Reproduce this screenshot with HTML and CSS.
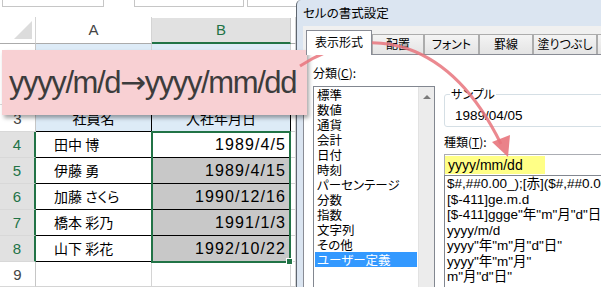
FILE: index.html
```html
<!DOCTYPE html>
<html lang="ja">
<head>
  <meta charset="UTF-8" />
  <title>セルの書式設定</title>
  <link rel="stylesheet" href="styles.css">
</head>
<body>
<div class="screen">

  <!-- Worksheet -->
  <div class="sheet">
    <div class="ribbon">
      <span class="rbox rbox-name"></span>
      <span class="rbox rbox-mid"></span>
      <span class="rbox rbox-formula"></span>
    </div>

    <div class="row colheads">
      <div class="corner"><span class="tri"></span></div>
      <div class="colhead">A</div>
      <div class="colhead sel">B</div>
      <div class="colhead"></div>
    </div>

    <div class="row r2">
      <div class="rowhead">2</div>
      <div class="cell blue tbl-bottom"></div>
      <div class="cell blue tbl-bottom"></div>
      <div class="cell"></div>
    </div>
    <div class="row r3">
      <div class="rowhead">3</div>
      <div class="cell blue tbl head">社員名</div>
      <div class="cell blue tbl head">入社年月日</div>
      <div class="cell"></div>
    </div>
    <div class="row rd">
      <div class="rowhead sel">4</div>
      <div class="cell tbl name">田中 博</div>
      <div class="cell tbl date">1989/4/5</div>
      <div class="cell"></div>
    </div>
    <div class="row rd">
      <div class="rowhead sel">5</div>
      <div class="cell tbl name">伊藤 勇</div>
      <div class="cell tbl date picked">1989/4/15</div>
      <div class="cell"></div>
    </div>
    <div class="row rd">
      <div class="rowhead sel">6</div>
      <div class="cell tbl name">加藤 さくら</div>
      <div class="cell tbl date picked">1990/12/16</div>
      <div class="cell"></div>
    </div>
    <div class="row rd">
      <div class="rowhead sel">7</div>
      <div class="cell tbl name">橋本 彩乃</div>
      <div class="cell tbl date picked">1991/1/3</div>
      <div class="cell"></div>
    </div>
    <div class="row rd">
      <div class="rowhead sel">8</div>
      <div class="cell tbl name">山下 彩花</div>
      <div class="cell tbl date picked">1992/10/22</div>
      <div class="cell"></div>
    </div>
    <div class="row r9">
      <div class="rowhead">9</div>
      <div class="cell"></div>
      <div class="cell"></div>
      <div class="cell"></div>
    </div>

    <!-- selected range B4:B8 -->
    <div class="selection"><span class="handle"></span></div>
  </div>

  <!-- Format Cells dialog -->
  <div class="dialog">
    <div class="titlebar">セルの書式設定</div>
    <div class="dlg-body">
      <div class="tabs">
        <span class="tab active">表示形式</span>
        <span class="tab t-align">配置</span>
        <span class="tab t-font">フォント</span>
        <span class="tab t-border">罫線</span>
        <span class="tab t-fill">塗りつぶし</span>
        <span class="tab t-protect">保護</span>
      </div>
      <div class="panel">
        <div class="cat-col">
          <div class="label">分類(<u>C</u>):</div>
          <div class="listbox cats">
            <ul>
              <li>標準</li>
              <li>数値</li>
              <li>通貨</li>
              <li>会計</li>
              <li>日付</li>
              <li>時刻</li>
              <li>パーセンテージ</li>
              <li>分数</li>
              <li>指数</li>
              <li>文字列</li>
              <li>その他</li>
              <li class="current">ユーザー定義</li>
            </ul>
            <div class="vscroll"><span class="up"></span></div>
          </div>
        </div>

        <div class="fmt-col">
          <fieldset class="sample">
            <legend>サンプル</legend>
            <div class="sample-val">1989/04/05</div>
          </fieldset>
          <div class="label kind">種類(<u>T</u>):</div>
          <div class="textbox"><span class="marker">yyyy/mm/dd</span></div>
          <ul class="listbox fmts">
            <li>$#,##0.00_);[赤]($#,##0.00)</li>
            <li>[$-411]ge.m.d</li>
            <li>[$-411]ggge"年"m"月"d"日"</li>
            <li>yyyy/m/d</li>
            <li>yyyy"年"m"月"d"日"</li>
            <li>yyyy"年"m"月"</li>
            <li>m"月"d"日"</li>
          </ul>
        </div>
      </div>
    </div>
  </div>

  <!-- Callout and arrow drawn over everything -->
  <div class="callout">yyyy/m/d<span class="to">→</span>yyyy/mm/dd</div>
  <svg class="arrow" width="601" height="287" viewBox="0 0 601 287">
    <path d="M 300 66 C 370 20, 450 40, 501 144" fill="none" stroke="#e8747c" stroke-width="3" stroke-opacity="0.85" />
    <polygon points="508,157 492,142 510,135" fill="#e8747c" fill-opacity="0.9" />
  </svg>

</div>
</body>
</html>
```

FILE: styles.css
```css
* {
  box-sizing: border-box;
}
body {
  margin: 0;
  font-family: "Liberation Sans", "Noto Sans CJK JP", sans-serif;
  color: #000;
  background: #fff;
  overflow: hidden;
}
.screen {
  position: relative;
  display: flex;
  width: 601px;
  height: 287px;
  overflow: hidden;
}

/* ---------- worksheet ---------- */
.sheet {
  position: relative;
  width: 296px;
  flex: none;
}
.ribbon {
  height: 17px;
  display: flex;
  align-items: flex-start;
}
.rbox {
  height: 7px;
  border: 1px solid #c6c6c6;
  border-top: none;
}
.rbox-name {
  margin-left: 2px;
  width: 102px;
}
.rbox-mid {
  margin-left: 30px;
  width: 110px;
}
.rbox-formula {
  margin-left: 3px;
  flex: 1;
  border-right: none;
}
.row {
  display: grid;
  grid-template-columns: 36px 116px 139px 5px;
}
.colheads {
  height: 27px;
}
.corner {
  display: flex;
  justify-content: flex-end;
  align-items: flex-end;
  padding: 0 3px 4px 0;
  border-right: 1px solid #d4d4d4;
  border-bottom: 1px solid #ababab;
}
.tri {
  width: 0;
  height: 0;
  border-left: 18px solid transparent;
  border-bottom: 18px solid #dcdcdc;
}
.colhead {
  border-right: 1px solid #d4d4d4;
  border-bottom: 1px solid #ababab;
  text-align: center;
  font-size: 15px;
  line-height: 26px;
  color: #444;
}
.colhead.sel {
  margin-top: 1px;
  background: #e1e1e1;
  color: #217346;
  border-bottom: 2px solid #217346;
  border-right-color: #c6c6c6;
  line-height: 23px;
}
.rowhead {
  display: flex;
  align-items: center;
  justify-content: center;
  font-size: 15px;
  color: #444;
  background: #fff;
  border-right: 1px solid #c6c6c6;
  border-bottom: 1px solid #d8d8d8;
}
.rowhead.sel {
  background: #e1e1e1;
  color: #217346;
  border-right: 2px solid #217346;
}
.r2 { height: 61px; }
.r3 { height: 27px; }
.rd { height: 26px; }
.r9 { height: 25px; }

.cell {
  border-right: 1px solid #d4d4d4;
  border-bottom: 1px solid #d4d4d4;
  white-space: nowrap;
  overflow: hidden;
}
.blue {
  background: #ddebf7;
}
.tbl-bottom {
  border-bottom-color: #000;
}
.tbl {
  border-right-color: #000;
  border-bottom-color: #000;
}
.head {
  font-family: "Noto Sans CJK JP", sans-serif;
  font-size: 14px;
  line-height: 26px;
  text-align: center;
}
.name {
  font-family: "Noto Sans CJK JP", sans-serif;
  font-feature-settings: "palt";
  font-size: 14px;
  line-height: 25px;
  padding-left: 18px;
}
.date {
  font-size: 16px;
  letter-spacing: 1.1px;
  line-height: 25px;
  text-align: right;
  padding-right: 4px;
}
.picked {
  background: #c8c8c8;
}
.selection {
  position: absolute;
  left: 151px;
  top: 131px;
  width: 140px;
  height: 132px;
  border: 2px solid #217346;
}
.handle {
  position: absolute;
  right: -4px;
  bottom: -4px;
  width: 7px;
  height: 7px;
  background: #217346;
  border: 1px solid #fff;
}

/* ---------- dialog ---------- */
.dialog {
  flex: 1;
  display: flex;
  flex-direction: column;
  border-left: 1px solid #5e6670;
  border-top-left-radius: 5px;
  background: #dbe5f1;
  overflow: hidden;
  font-size: 12px;
}
.titlebar {
  height: 27px;
  padding-left: 6px;
  font-family: "Noto Sans CJK JP", sans-serif;
  font-feature-settings: "palt";
  font-size: 12.5px;
  line-height: 26px;
}
.dlg-body {
  flex: 1;
  display: flex;
  flex-direction: column;
  margin-left: 6px;
  padding-top: 4px;
  background: #f0f0f0;
}
.tabs {
  display: flex;
  align-items: flex-end;
  height: 24px;
  padding-left: 3px;
}
.tab {
  flex: none;
  height: 20px;
  border: 1px solid #acacac;
  border-bottom: none;
  background: linear-gradient(#f4f4f4, #e4e4e4);
  font-family: "Noto Sans CJK JP", sans-serif;
  font-feature-settings: "palt";
  font-size: 12px;
  line-height: 18px;
  text-align: center;
  white-space: nowrap;
}
.tab.active {
  position: relative;
  z-index: 1;
  width: 66px;
  height: 25px;
  margin-bottom: -1px;
  background: #fff;
  border-color: #898c95;
  line-height: 22px;
}
.t-align { width: 52px; }
.t-font { width: 55px; }
.t-border { width: 54px; }
.t-fill { width: 64px; }
.t-protect { width: 50px; }

.panel {
  flex: 1;
  display: flex;
  gap: 9px;
  padding: 10px 0 0 9px;
  background: #fff;
  border-top: 1px solid #898c95;
  border-left: 1px solid #898c95;
}
.label {
  font-family: "Noto Sans CJK JP", sans-serif;
  font-size: 12px;
  line-height: 15px;
}
.cat-col {
  flex: none;
  width: 122px;
}
.listbox {
  margin: 0;
  padding: 0;
  list-style: none;
  border: 1px solid #828790;
  background: #fff;
}
.cats {
  display: flex;
  height: 210px;
  margin-top: 6px;
}
.cats ul {
  flex: 1;
  margin: 0;
  padding: 0;
  list-style: none;
  font-family: "Noto Sans CJK JP", sans-serif;
  font-feature-settings: "palt";
  font-size: 12.5px;
  line-height: 15px;
}
.cats li {
  margin: 0 1px;
  padding-left: 2px;
  white-space: nowrap;
}
.cats li.current {
  background: #3399ff;
  color: #fff;
}
.vscroll {
  width: 16px;
  background: #ececec;
  border-left: 1px solid #e2e2e2;
  display: flex;
  justify-content: center;
  padding-top: 8px;
}
.up {
  width: 0;
  height: 0;
  border-left: 4px solid transparent;
  border-right: 4px solid transparent;
  border-bottom: 4px solid #7a7a7a;
}

.fmt-col {
  flex: none;
  width: 220px;
}
.sample {
  margin: 22px 0 0;
  padding: 7px 0 3px 10px;
  border: 1px solid #d5dfe5;
  border-radius: 3px;
}
.sample legend {
  margin-left: -5px;
  padding: 0 1px;
  font-family: "Noto Sans CJK JP", sans-serif;
  font-feature-settings: "palt";
  font-size: 12px;
  line-height: 14px;
}
.sample-val {
  font-size: 13.5px;
  line-height: 15px;
}
.kind {
  margin-top: 7px;
}
.textbox {
  height: 22px;
  margin-top: 5px;
  padding-top: 1px;
  border: 1px solid #abadb3;
  background: #fff;
}
.marker {
  display: block;
  width: 100px;
  height: 18px;
  padding-left: 3px;
  background: #ffff86;
  font-size: 14px;
  line-height: 18px;
}
.fmts {
  height: 120px;
  margin-top: -1px;
  padding-top: 0;
  font-size: 13.5px;
  line-height: 15.5px;
}
.fmts li {
  padding-left: 2px;
  white-space: nowrap;
  overflow: hidden;
}

/* ---------- overlays ---------- */
.callout {
  position: absolute;
  left: 2px;
  top: 50px;
  width: 305px;
  height: 65px;
  padding-left: 7px;
  background: #f8d0d3;
  box-shadow: 2px 3px 4px rgba(0, 0, 0, 0.35);
  font-family: "Liberation Sans", "DejaVu Sans", sans-serif;
  font-size: 31px;
  line-height: 65px;
  letter-spacing: -1.4px;
  color: #3c3c3c;
  white-space: nowrap;
}
.callout .to {
  font-family: "DejaVu Sans", sans-serif;
}
.arrow {
  position: absolute;
  left: 0;
  top: 0;
  pointer-events: none;
}
```
